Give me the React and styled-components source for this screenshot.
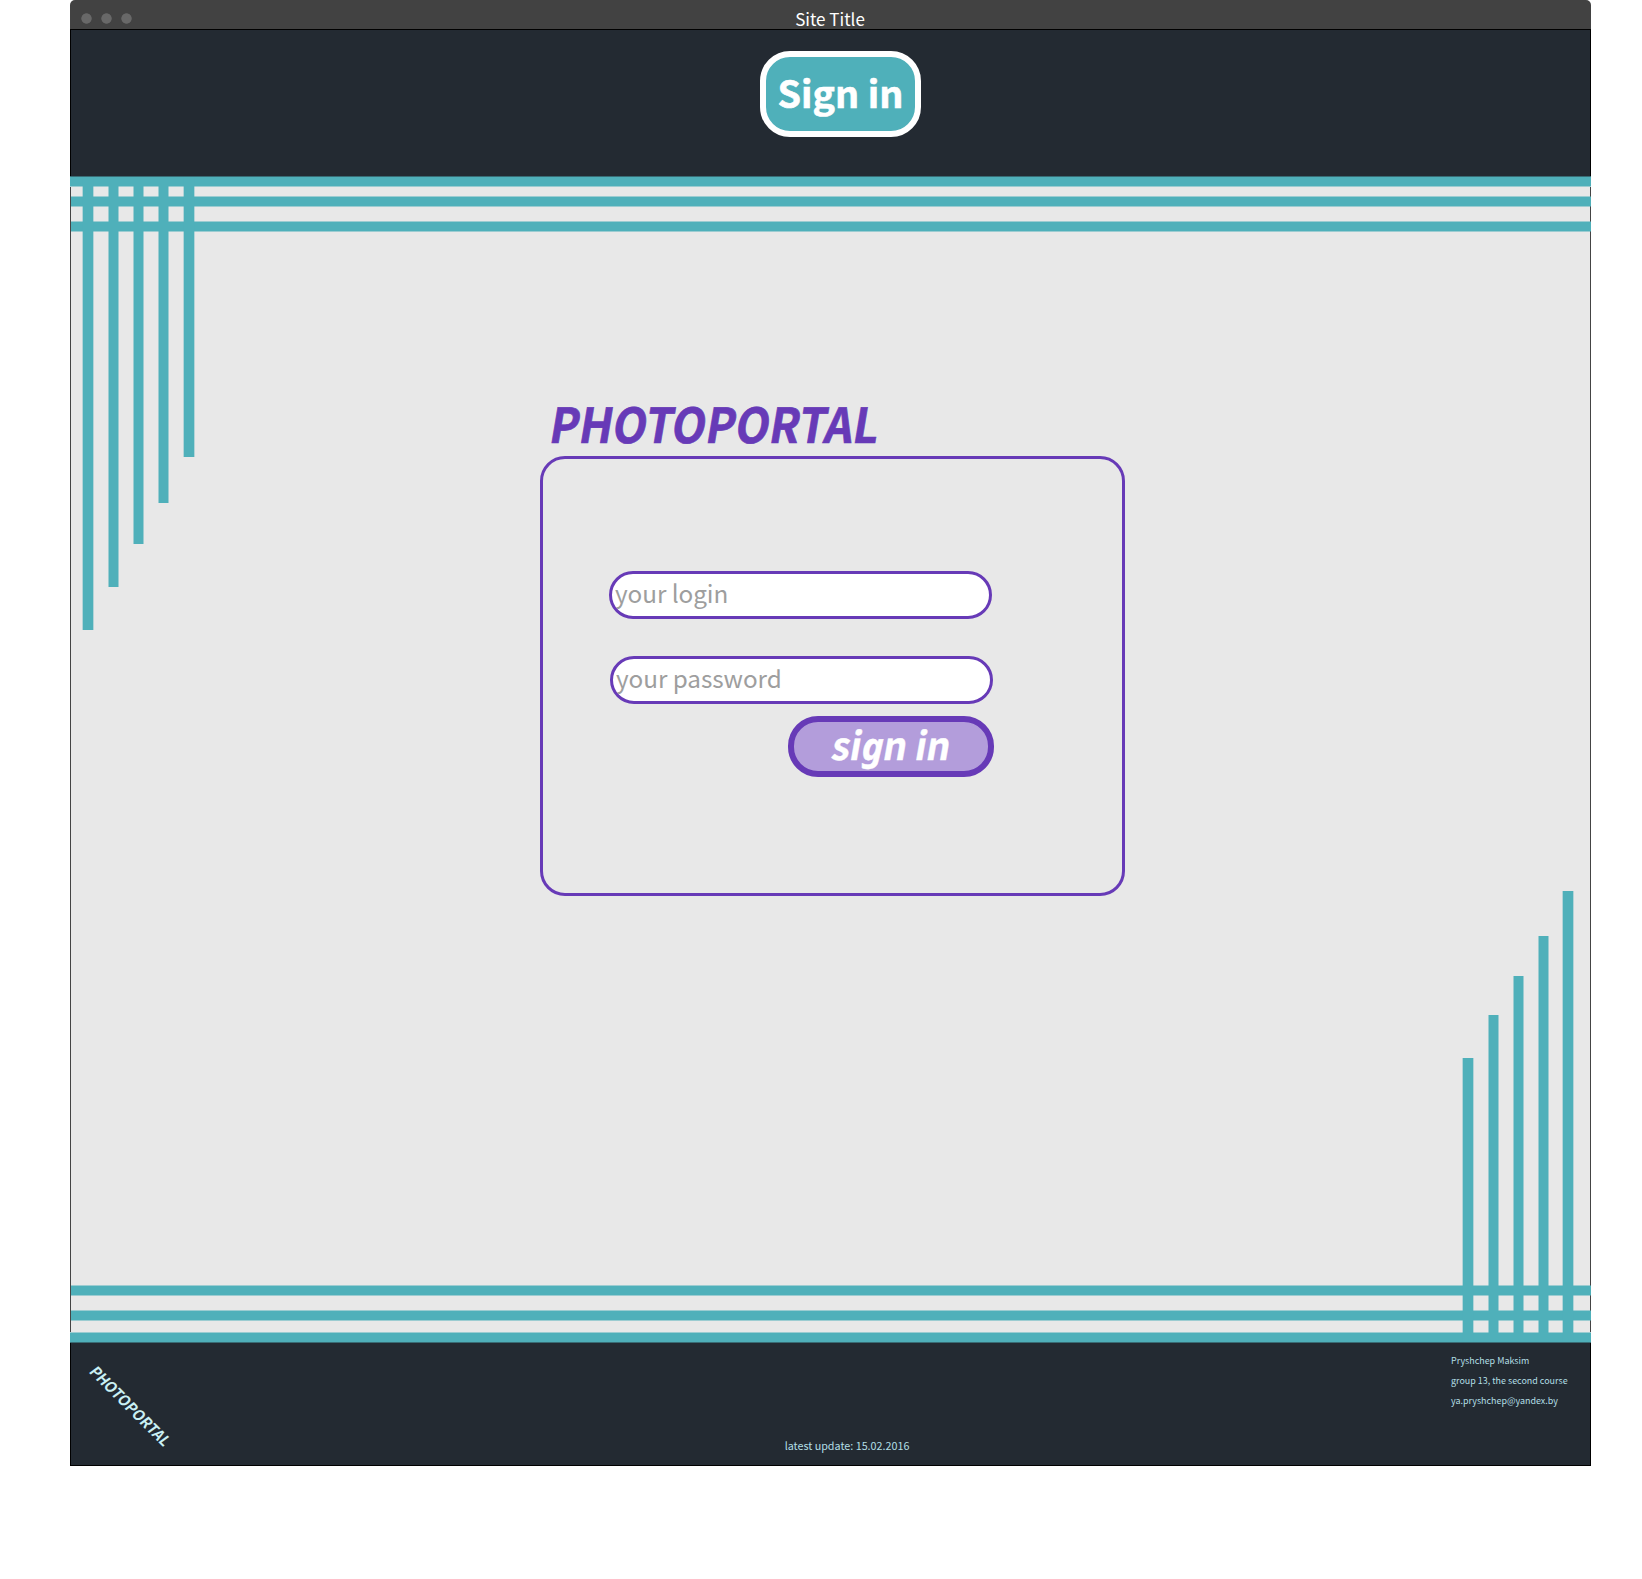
import React from "react";
import styled, { createGlobalStyle } from "styled-components";

const teal = "#4fb0ba";
const tealEdge = "rgba(79, 176, 186, 0.5)";
const purple = "#673ab7";
const ink = "#232a32";

const GlobalStyle = createGlobalStyle`
  *, *::before, *::after { box-sizing: border-box; }
  body {
    margin: 0;
    background: #fff;
    font-family: "Noto Sans CJK SC", "Open Sans", sans-serif;
  }
`;

const Page = styled.div`
  min-height: 1579px;
  padding-left: 70px;
`;

const Window = styled.div`
  width: 1521px;
  height: 1466px;
  display: flex;
  flex-direction: column;
`;

const TitleBar = styled.div`
  height: 30px;
  flex: none;
  display: grid;
  grid-template-columns: 1fr auto 1fr;
  align-items: center;
  padding: 7px 0 0 11px;
  background: #424242;
  border-bottom: 1px solid #000;
  border-radius: 5px 5px 0 0;
`;

const Dots = styled.div`
  display: flex;
  gap: 9px;
  padding-top: 1px;
`;

const Dot = styled.i`
  width: 11px;
  height: 11px;
  background: radial-gradient(circle, #686868 4.8px, transparent 5.5px);
`;

const WindowTitle = styled.span`
  margin-right: 12px;
  padding-top: 2px;
  color: #fff;
  font-size: 17px;
  line-height: 20px;
`;

const Header = styled.header`
  height: 146px;
  flex: none;
  display: flex;
  justify-content: center;
  align-items: flex-start;
  padding: 21px 0 0 20px;
  background: ${ink};
  border: solid #000;
  border-width: 0 1px;
`;

const SignInLink = styled.button`
  width: 161px;
  height: 86px;
  padding: 0 0 5px;
  border: 6px solid #fff;
  border-radius: 30px;
  background: ${teal};
  color: #fff;
  font: 700 37.7px/60px "Noto Sans CJK SC", sans-serif;
  -webkit-text-stroke: 0.6px #fff;
  white-space: nowrap;
`;

const Body = styled.main`
  position: relative;
  height: 1167px;
  flex: none;
  display: flex;
  flex-direction: column;
  background: #e8e8e8;
`;

const Stripe = styled.div`
  position: relative;
  height: 11px;
  flex: none;
  margin-top: ${(p) => p.$gap || 0}px;
  margin-left: ${(p) => p.$inset || 0}px;
  background: ${teal};
  background-clip: padding-box;
  border: solid ${tealEdge};
  border-width: 1px 0;
  ${(p) => p.$dark && `border-${p.$dark}-color: #396d76;`}
`;

const Content = styled.section`
  flex: 1;
  margin: -45px 0 -47px;
  padding: 202px 0 0 469px;
  border: solid #444;
  border-width: 0 1px;
`;

const Bars = styled.div`
  position: absolute;
  display: flex;
  gap: 14px;
  align-items: ${(p) => (p.$bottom ? "flex-end" : "flex-start")};
  ${(p) => (p.$bottom ? "right: 17px; bottom: 1px;" : "left: 12px; top: 1px;")}
`;

const Bar = styled.div`
  width: ${(p) => (p.$wide ? 12 : 11)}px;
  height: ${(p) => p.$length}px;
  margin-left: ${(p) => p.$shift || 0}px;
  background: ${teal};
  background-clip: padding-box;
  border: solid ${(p) => (p.$wide ? "rgba(79, 176, 186, 0.35)" : tealEdge)};
  border-width: 0 1px;
`;

const Brand = styled.h1`
  margin: 0 0 0 8px;
  height: 67px;
  color: ${purple};
  font-size: 48px;
  line-height: 67px;
  font-weight: 700;
  -webkit-text-stroke: 0.7px ${purple};
  transform: skewX(-9.5deg) scaleX(0.922);
  transform-origin: 0 53px;
`;

const Card = styled.form`
  width: 585px;
  height: 440px;
  padding: 112px 0 0 66px;
  border: 3px solid ${purple};
  border-radius: 25px;
  display: flex;
  flex-direction: column;
  align-items: flex-start;
`;

const Field = styled.input`
  width: 383px;
  height: 48px;
  margin: ${(p) => p.$margin};
  padding: 0 0 5px 3px;
  border: 3px solid ${purple};
  border-radius: 24px;
  background: #fff;
  font: 400 24.3px/36px "Noto Sans CJK SC", sans-serif;
  letter-spacing: -0.05px;
  outline: none;
  &::placeholder { color: #9e9e9e; opacity: 1; }
`;

const Submit = styled.button`
  width: 206px;
  height: 61px;
  margin: 12px 0 0 179px;
  padding: 0 0 5px 2px;
  border: 6px solid ${purple};
  border-radius: 30px;
  background: #b39ddb;
  color: #fff;
  font: 700 38px/42px "Noto Sans CJK SC", sans-serif;
  -webkit-text-stroke: 0.4px #fff;
`;

const SubmitLabel = styled.span`
  display: inline-block;
  transform: skewX(-10deg) scaleX(0.97);
`;

const CursiveG = styled.span`
  font-family: "Noto Sans", sans-serif;
  font-style: italic;
  display: inline-block;
  transform: skewX(9deg);
  line-height: 1;
`;

const Footer = styled.footer`
  flex: 1;
  display: grid;
  grid-template-columns: 1fr auto 1fr;
  background: ${ink};
  border: 1px solid #000;
  border-top: 0;
  color: #b2dfe5;
`;

const FooterBrand = styled.span`
  width: fit-content;
  height: 24px;
  margin: 51px 0 0 4px;
  transform: rotate(45deg) skewX(-9.5deg) scaleX(0.955);
  color: #c9f0f4;
  font-size: 15px;
  line-height: 24px;
  font-weight: 700;
`;

const Updated = styled.span`
  align-self: end;
  margin: 0 0 9px 33px;
  font-size: 10.75px;
  line-height: 20px;
`;

const Author = styled.address`
  justify-self: end;
  width: 139px;
  padding-top: 8px;
  font-size: 8.95px;
  line-height: 20px;
  font-style: normal;
  white-space: nowrap;
`;

const AuthorLine = styled.div``;

export default function App() {
  return (
    <Page>
      <GlobalStyle />
      <Window>
        <TitleBar>
          <Dots><Dot /><Dot /><Dot /></Dots>
          <WindowTitle>Site Title</WindowTitle>
        </TitleBar>
        <Header>
          <SignInLink type="button">Sign in</SignInLink>
        </Header>
        <Body>
          <Stripe $dark="top" />
          <Stripe $gap={9} $inset={1} />
          <Stripe $gap={14} $inset={1} />
          <Content>
            <Brand>PHOTOPORTAL</Brand>
            <Card onSubmit={(e) => e.preventDefault()}>
              <Field placeholder="your login" $margin="0" />
              <Field type="password" placeholder="your password" $margin="37px 0 0 1px" />
              <Submit>
                <SubmitLabel>si<CursiveG>g</CursiveG>n in</SubmitLabel>
              </Submit>
            </Card>
          </Content>
          <Stripe $inset={1} />
          <Stripe $gap={14} $inset={1} />
          <Stripe $gap={11} $dark="bottom" />
          <Bars>
            <Bar $length={453} $wide />
            <Bar $length={410} />
            <Bar $length={367} />
            <Bar $length={326} />
            <Bar $length={280} $wide />
          </Bars>
          <Bars $bottom>
            <Bar $length={284} $wide />
            <Bar $length={327} />
            <Bar $length={366} />
            <Bar $length={406} />
            <Bar $length={451} $wide $shift={-1} />
          </Bars>
        </Body>
        <Footer>
          <FooterBrand>PHOTOPORTAL</FooterBrand>
          <Updated>latest update: 15.02.2016</Updated>
          <Author>
            <AuthorLine>Pryshchep Maksim</AuthorLine>
            <AuthorLine>group 13, the second course</AuthorLine>
            <AuthorLine>ya.pryshchep@yandex.by</AuthorLine>
          </Author>
        </Footer>
      </Window>
    </Page>
  );
}
